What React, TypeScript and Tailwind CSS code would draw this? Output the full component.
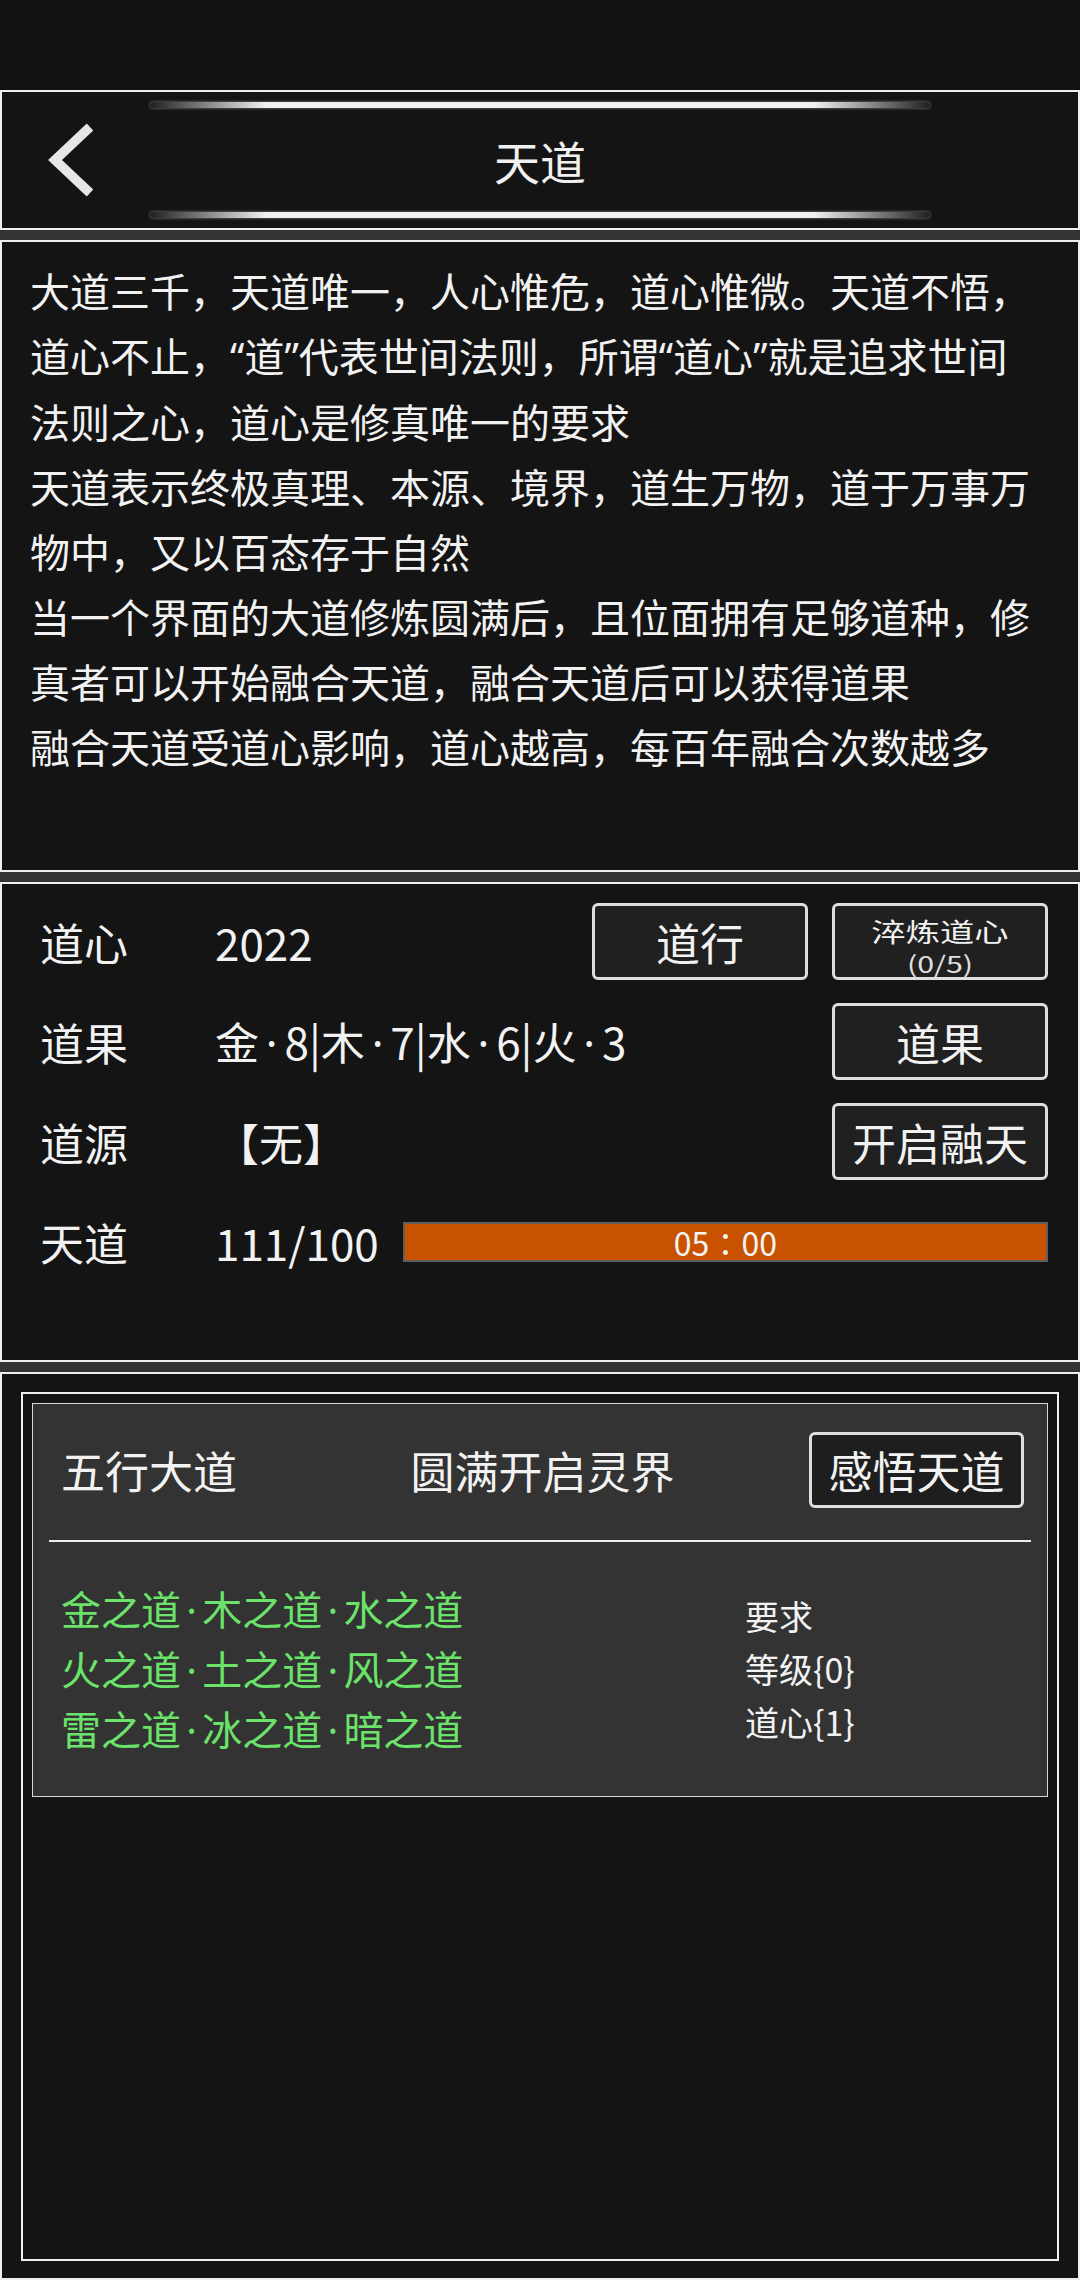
import React from "react";

// quotes and middle dots are set in a latin face so they stay narrow
const Q = ({ c }: { c: string }) => <span className="font-['Noto_Sans',sans-serif]">{c}</span>;
const Dot = ({ w }: { w: string }) => (
  <span className={`inline-block text-center font-['Noto_Sans',sans-serif] ${w}`}>·</span>
);

const lore: React.ReactNode[] = [
  "大道三千，天道唯一，人心惟危，道心惟微。天道不悟，",
  <>
    道心不止，<Q c="“" />道<Q c="”" />代表世间法则，所谓<Q c="“" />道心<Q c="”" />就是追求世间
  </>,
  "法则之心，道心是修真唯一的要求",
  "天道表示终极真理、本源、境界，道生万物，道于万事万",
  "物中，又以百态存于自然",
  "当一个界面的大道修炼圆满后，且位面拥有足够道种，修",
  "真者可以开始融合天道，融合天道后可以获得道果",
  "融合天道受道心影响，道心越高，每百年融合次数越多",
];

const paths = [
  ["金之道", "木之道", "水之道"],
  ["火之道", "土之道", "风之道"],
  ["雷之道", "冰之道", "暗之道"],
];
const needs = ["要求", "等级{0}", "道心{1}"];

function Btn({ children }: { children: React.ReactNode }) {
  return (
    <div className="w-[216px] h-[77px] shrink-0 flex items-center justify-center rounded-[6px] border-[3px] border-[#dedede] bg-[#202020] text-[44px] leading-none text-[#f2f2f2]">
      {children}
    </div>
  );
}

function GlowLine() {
  return (
    <div className="h-[6px] w-full rounded-full bg-[linear-gradient(90deg,rgba(255,255,255,0.05),#f2f2f2_15%,#f2f2f2_85%,rgba(255,255,255,0.05))] shadow-[0_0_3px_rgba(255,255,255,0.5)]" />
  );
}

function StatRow({ label, children }: { label: string; children: React.ReactNode }) {
  return (
    <div className="h-[77px] flex items-center">
      <div className="w-[175px] shrink-0 text-[44px] leading-none">{label}</div>
      {children}
    </div>
  );
}

export default function App() {
  return (
    <div className="w-[1080px] h-[2280px] flex flex-col bg-[#333333] text-[#f2f2f2] font-['Noto_Sans_CJK_SC','Noto_Sans',sans-serif] overflow-hidden">
      <div className="h-[90px] shrink-0 bg-[#111111]" />

      <div className="flex-1 flex flex-col gap-[10px]">
        {/* header */}
        <div className="h-[140px] shrink-0 border-2 border-[#efefef] bg-[#141414] grid grid-cols-[148px_780px_1fr]">
          <div className="flex items-center">
            <svg className="ml-[38px]" width="60" height="80" viewBox="0 0 60 80">
              <polyline
                points="50,7 15,40 50,73"
                fill="none"
                stroke="#e6e6e6"
                strokeWidth="9.5"
                strokeLinecap="butt"
                strokeLinejoin="miter"
              />
            </svg>
          </div>
          <div className="flex flex-col justify-between items-center py-[10px]">
            <GlowLine />
            <div className="text-[46px] leading-none text-[#f0f0f0]">天道</div>
            <GlowLine />
          </div>
          <div />
        </div>

        {/* lore */}
        <div className="h-[632px] shrink-0 border-2 border-[#efefef] bg-[#141414] pl-[28px] pt-[16px] text-[40px] leading-[65px] text-[#f2f2f2]">
          {lore.map((line, i) => (
            <div key={i} className="whitespace-nowrap">
              {line}
            </div>
          ))}
        </div>

        {/* stats */}
        <div className="h-[480px] shrink-0 border-2 border-[#efefef] bg-[#141414] pl-[38px] pr-[30px] pt-[19px] flex flex-col gap-[23px]">
          <StatRow label="道心">
            <div className="flex-1 text-[44px] leading-none">2022</div>
            <div className="flex gap-[24px]">
              <Btn>道行</Btn>
              <Btn>
                <div className="h-full pt-[6px] flex flex-col items-center scale-x-[1.32]">
                  <span className="text-[26px] leading-[38px]">淬炼道心</span>
                  <span className="text-[23px] leading-[26px] text-[#e0e0e0]">(0/5)</span>
                </div>
              </Btn>
            </div>
          </StatRow>
          <StatRow label="道果">
            <div className="flex-1 text-[44px] leading-none whitespace-nowrap">
              金<Dot w="w-[0.58em]" />8|木<Dot w="w-[0.58em]" />7|水<Dot w="w-[0.58em]" />6|火
              <Dot w="w-[0.58em]" />3
            </div>
            <Btn>道果</Btn>
          </StatRow>
          <StatRow label="道源">
            <div className="flex-1 text-[44px] leading-none">【无】</div>
            <Btn>开启融天</Btn>
          </StatRow>
          <StatRow label="天道">
            <div className="text-[44px] leading-none">111/100</div>
            <div className="ml-[24px] flex-1 h-[40px] border-2 border-[#5e5e5e] bg-[#c85200] flex items-center justify-center text-[32px] leading-none text-[#f4f4f4] font-['Noto_Sans_CJK_TC',sans-serif]">
              05：00
            </div>
          </StatRow>
        </div>

        {/* bottom */}
        <div className="flex-1 border-2 border-[#efefef] bg-[#141414] flex flex-col px-[19px] pt-[18px] pb-[17px]">
          <div className="flex-1 border-2 border-[#f0f0f0] p-[9px]">
            <div className="border-[1.5px] border-[#d8d8d8] bg-[#333333] pt-[28px] pb-[37px]">
              <div className="grid grid-cols-[1fr_auto_1fr] items-center pl-[28px] pr-[23px]">
                <div className="text-[44px] leading-none">五行大道</div>
                <div className="text-[44px] leading-none">圆满开启灵界</div>
                <div className="flex justify-end">
                  <div className="w-[215px] h-[76px] flex items-center justify-center rounded-[6px] border-[3px] border-[#dedede] bg-[#1e1e1e] text-[44px] leading-none">
                    感悟天道
                  </div>
                </div>
              </div>
              <div className="mx-[16px] mt-[32px] h-[2px] bg-[#f0f0f0]" />
              <div className="mt-[37px] flex pl-[28px]">
                <div className="w-[684px] text-[40px] leading-[59px] text-[#6be36b]">
                  {paths.map((p) => (
                    <div key={p[0]} className="whitespace-nowrap">
                      {p[0]}
                      <Dot w="w-[0.53em]" />
                      {p[1]}
                      <Dot w="w-[0.53em]" />
                      {p[2]}
                    </div>
                  ))}
                </div>
                <div className="mt-[10px] text-[34px] leading-[53px] text-[#f2f2f2]">
                  {needs.map((n) => (
                    <div key={n}>{n}</div>
                  ))}
                </div>
              </div>
            </div>
          </div>
        </div>
      </div>
    </div>
  );
}
